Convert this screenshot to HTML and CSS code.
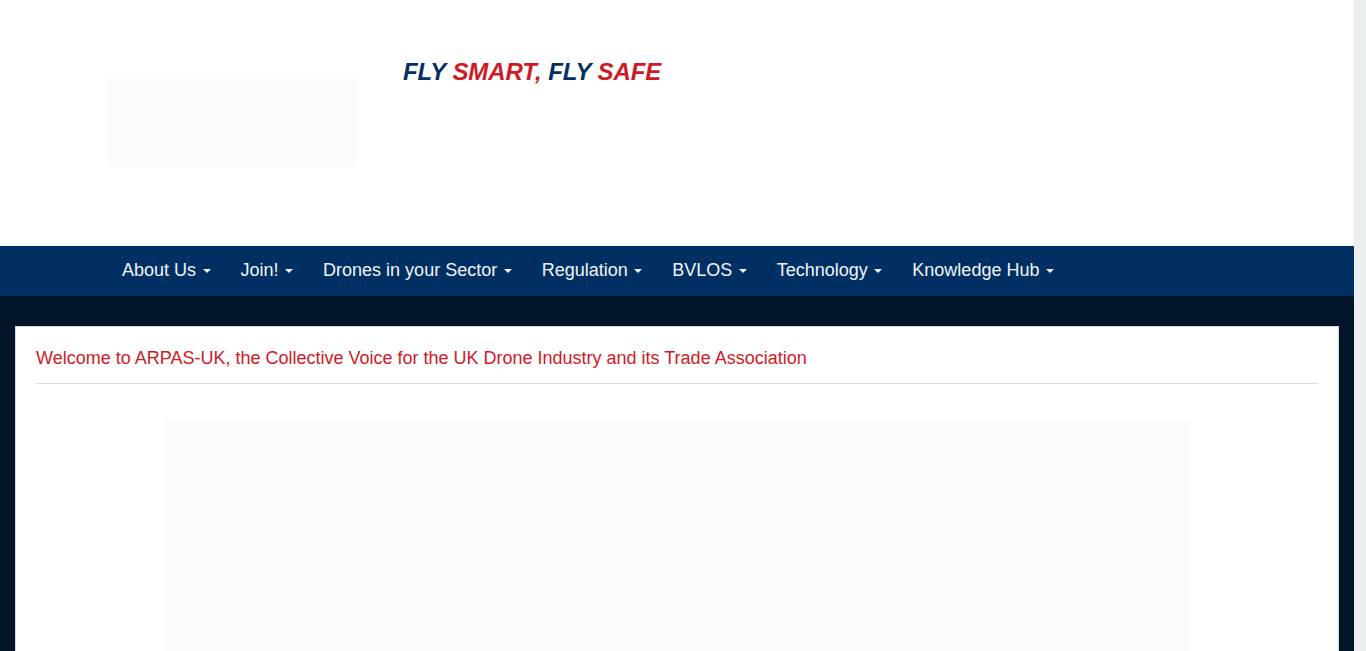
FILE: index.html
```html
<!DOCTYPE html>
<html lang="en">
<head>
<meta charset="utf-8">
<title>ARPAS-UK</title>
<link rel="stylesheet" href="styles.css">
</head>
<body>
<div class="viewport">
  <div class="page">
    <header class="header">
      <div class="container header-inner">
        <div class="logo" aria-label="ARPAS-UK logo"></div>
        <p class="tagline"><span class="blue">FLY</span> <span class="red">SMART,</span> <span class="blue">FLY</span> <span class="red">SAFE</span></p>
      </div>
    </header>
    <nav class="navbar">
      <ul class="container nav">
        <li><a href="#">About Us <span class="caret"></span></a></li>
        <li><a href="#">Join! <span class="caret"></span></a></li>
        <li><a href="#">Drones in your Sector <span class="caret"></span></a></li>
        <li><a href="#">Regulation <span class="caret"></span></a></li>
        <li><a href="#">BVLOS <span class="caret"></span></a></li>
        <li><a href="#">Technology <span class="caret"></span></a></li>
        <li><a href="#">Knowledge Hub <span class="caret"></span></a></li>
      </ul>
    </nav>
    <main class="main">
      <section class="panel">
        <h1 class="welcome">Welcome to ARPAS-UK, the Collective Voice for the UK Drone Industry and its Trade Association</h1>
        <hr class="rule">
        <div class="hero" aria-label="Banner image"></div>
      </section>
    </main>
  </div>
  <div class="scroll-track"></div>
</div>
</body>
</html>
```
FILE: styles.css
```css
* { box-sizing: border-box; }
html, body { margin: 0; padding: 0; height: 100%; overflow: hidden; }
body {
  font-family: "Liberation Sans", Arial, sans-serif;
  background: #fff;
}
.viewport { display: flex; height: 651px; }
.page { flex: 1; display: flex; flex-direction: column; min-width: 0; }
.scroll-track { width: 12px; flex: none; background: #ebeff0; }

.container { width: 1170px; margin: 0 auto; padding: 0 15px; }

.header { height: 246px; background: #fff; flex: none; }
.header-inner { display: flex; align-items: flex-start; padding-top: 56px; }
.logo {
  width: 250px; height: 88px; margin-top: 23px;
  background: #f9fafb;
}
.tagline {
  margin: 1px 0 0 46px;
  font-size: 24px; font-weight: bold; font-style: italic;
  line-height: 30px; letter-spacing: -0.1px;
}
.blue { color: #06305f; }
.red { color: #cf1a26; }

.navbar { background: #003063; height: 50px; flex: none; }
.nav { list-style: none; display: flex; height: 50px; margin-top: 0; margin-bottom: 0; }
.nav li { display: block; }
.nav a {
  display: block; padding: 0 15px; line-height: 48px;
  color: #f2f4f8; text-decoration: none; font-size: 18px;
}
.caret {
  display: inline-block; width: 0; height: 0; margin-left: 1.5px;
  vertical-align: middle;
  border-top: 4px solid; border-left: 4px solid transparent; border-right: 4px solid transparent;
}

.main { flex: 1; background: #021427; padding: 30px 15px 0; }
.panel {
  background: #fff; border: 1px solid #d8d8d8; border-bottom: 0;
  height: 100%; padding: 20px 20px 0;
}
.welcome {
  margin: 0; font-weight: normal; font-size: 18px; line-height: 22px;
  color: #cf1a26;
}
.rule { border: 0; border-top: 1px solid #dcdcdc; margin: 14px 0 37px; }
.hero { width: 1024px; height: 260px; margin: 0 auto; background: #f9fafb; }
```
